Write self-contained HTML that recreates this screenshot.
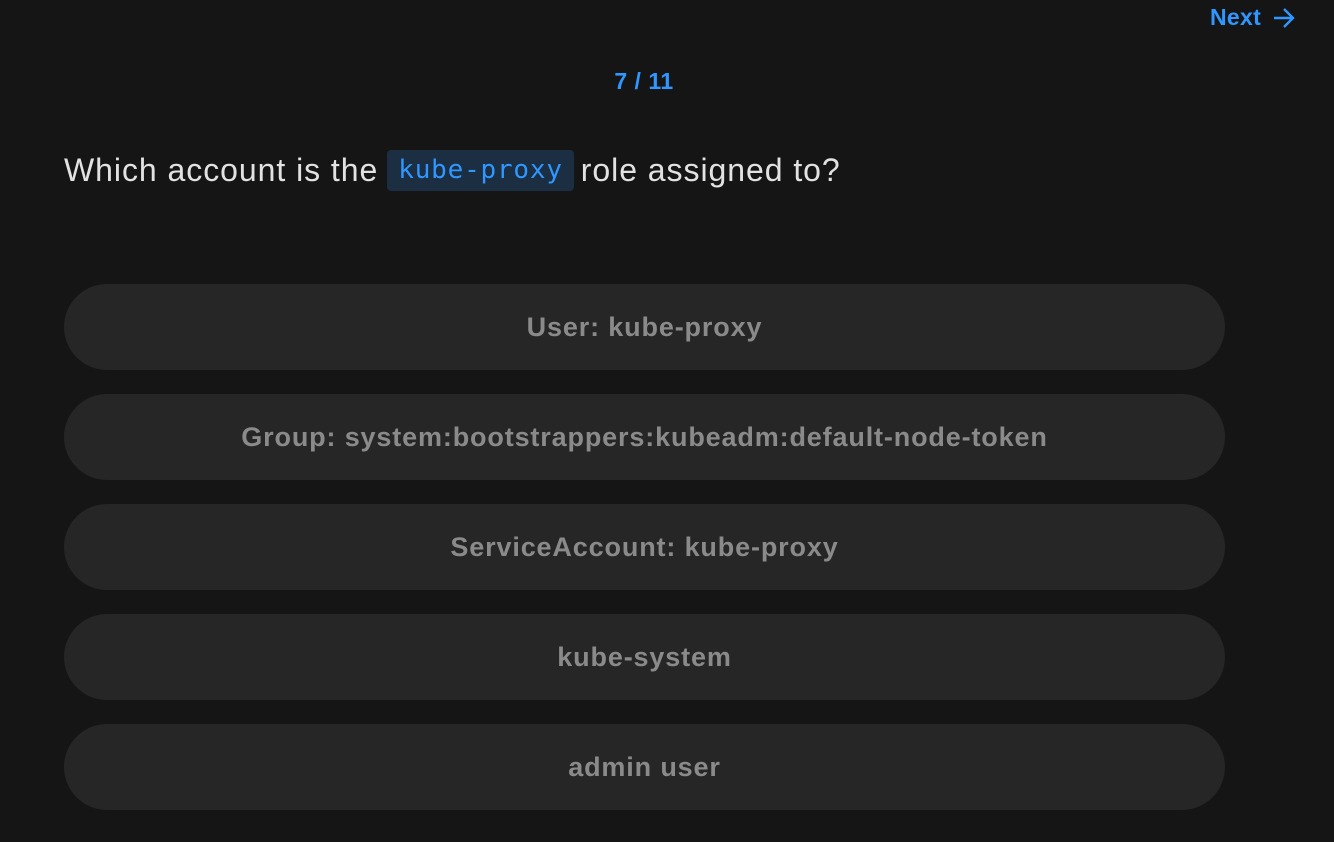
<!DOCTYPE html>
<html><head><style>
body{margin:0;width:1334px;height:842px;background:#151515;font-family:"Liberation Sans",sans-serif;position:relative;overflow:hidden}
.next{position:absolute;left:1210px;top:4px;color:#2f97ff;font-weight:bold;font-size:23px;letter-spacing:0.3px;display:flex;align-items:center}
.cnt{position:absolute;left:0;width:1288px;top:68px;text-align:center;color:#2f97ff;font-weight:bold;font-size:23px;letter-spacing:0.5px}
.q{position:absolute;left:64px;top:150px;color:#e2e2e2;font-size:32px;letter-spacing:0.95px;line-height:40px}
.code{display:inline-block;background:#1b2e42;color:#2f97ff;font-family:"DejaVu Sans Mono",monospace;font-size:26px;letter-spacing:0.8px;border-radius:4px;padding:0 11px;height:41px;line-height:41px;vertical-align:top;margin:0 7px 0 9px}
.opt{position:absolute;left:64px;width:1161px;height:86px;border-radius:43px;background:#262626;color:#8a8a8a;font-weight:bold;font-size:27px;letter-spacing:0.85px;text-align:center;line-height:86px}
</style></head><body>
<div class="next">Next<svg width="26" height="26" viewBox="0 0 26 26" style="margin-left:10px"><path d="M3 13H22M13 4l9 9-9 9" fill="none" stroke="#2f97ff" stroke-width="2.4"/></svg></div>
<div class="cnt">7 / 11</div>
<div class="q">Which account is the<span class="code">kube-proxy</span>role assigned to?</div>
<div class="opt" style="top:284px">User: kube-proxy</div>
<div class="opt" style="top:394px">Group: system:bootstrappers:kubeadm:default-node-token</div>
<div class="opt" style="top:504px">ServiceAccount: kube-proxy</div>
<div class="opt" style="top:614px">kube-system</div>
<div class="opt" style="top:724px">admin user</div>
</body></html>
